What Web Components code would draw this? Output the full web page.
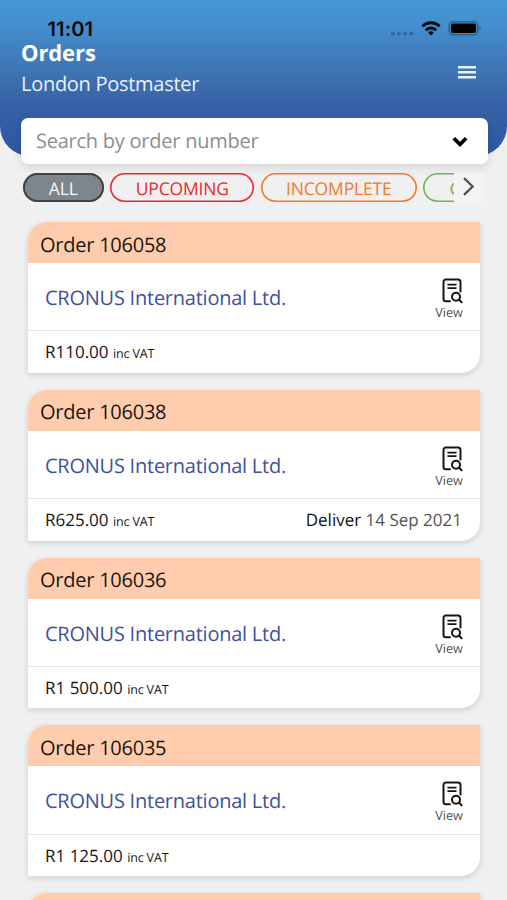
<!DOCTYPE html>
<html lang="en">
<head>
<meta charset="utf-8">
<title>Orders</title>
<style>
html,body{margin:0;height:900px;overflow:hidden;background:#f0f0f0}
body{font-family:"Open Sans","Noto Sans",sans-serif;color:#111;text-rendering:geometricPrecision}
</style>
</head>
<body>
<orders-app></orders-app>
<script>
const define = (name, html, setup) => customElements.define(name, class extends HTMLElement {
  connectedCallback() {
    if (this.shadowRoot) return;
    this.attachShadow({mode: "open"}).innerHTML = html;
    if (setup) setup(this, this.shadowRoot);
  }
});

define("status-bar", `
<style>
:host{display:flex;align-items:flex-end;justify-content:space-between;height:20px;padding:18px 26px 0 47.5px;color:#06080c}
time{font:600 20px/18px Inter,"Liberation Sans",sans-serif;letter-spacing:.15px}
svg{display:block}
</style>
<time>11:01</time>
<svg width="92" height="20" viewBox="389 18 92 20">
  <g fill="#34699c"><circle cx="392.8" cy="33.5" r="2"/><circle cx="398.9" cy="33.5" r="2"/><circle cx="405" cy="33.5" r="2"/><circle cx="411.2" cy="33.5" r="2"/></g>
  <g fill="none" stroke="#05080c" stroke-width="2.9">
    <path d="M422.4 26.2a12.4 12.4 0 0 1 17.2 0"/>
    <path d="M425.7 30.2a7.6 7.6 0 0 1 10.6 0"/>
  </g>
  <path d="M431 35.6l-2.9-3a4.2 4.2 0 0 1 5.8 0z" fill="#05080c"/>
  <rect x="449.2" y="21.7" width="28.6" height="13" rx="4" fill="none" stroke="#315f8a" stroke-width="1.6"/>
  <rect x="451" y="23.5" width="25" height="9.6" rx="2" fill="#000"/>
  <path d="M479.3 26.2q1.6.8 1.6 2t-1.6 2z" fill="#315f8a"/>
</svg>`);

define("page-header", `
<style>
:host{display:block;box-sizing:border-box;height:156px;background:linear-gradient(#4797d5 0,#4390cf 22px,#4180bf 50px,#3e72b1 75px,#3861a6 105px,#325da5 125px,#2e57a0 156px);border-radius:0 0 30px 30px;color:#fff}
.row{display:flex;justify-content:space-between;padding:0 31px 0 21px}
h1{margin:0;font:700 22px/31px "Open Sans",sans-serif;letter-spacing:-.1px}
p{margin:0;font-size:20px;line-height:30px;letter-spacing:-.28px;color:#e9f2fc}
.menu{margin-top:28px}
svg{display:block}
</style>
<status-bar></status-bar>
<div class="row">
  <div><h1><slot name="title"></slot></h1><p><slot></slot></p></div>
  <svg class="menu" width="18" height="14" viewBox="0 0 18 14"><path d="M0 1.2h18M0 6.2h18M0 11.3h18" stroke="#e9f3ff" stroke-width="2.5"/></svg>
</div>`);

define("search-field", `
<style>
:host{display:flex;box-sizing:border-box;align-items:center;justify-content:space-between;height:45.5px;margin:-38px 19.5px 0 20.5px;padding:1px 19px 0 15.5px;background:#fff;border-radius:7px;box-shadow:0 3px 9px rgba(0,0,0,.13);position:relative;color:#8b8e91;font-size:20px;line-height:28px;letter-spacing:-.24px}
svg{margin-top:2px}
</style>
<span><slot></slot></span>
<svg width="17" height="12" viewBox="0 0 17 12"><path d="M1.8 2.3l6.2 6.1 6.2-6.1" fill="none" stroke="#000" stroke-width="3.7"/></svg>`);

define("filter-chip", `
<style>
:host{display:flex;flex:none;box-sizing:border-box;align-items:center;justify-content:center;height:29px;padding-top:2px;box-shadow:inset 0 0 0 1.6px currentColor;border-radius:15px;font-size:17.5px;line-height:24px;letter-spacing:-.15px}
:host([selected]){background:#7f868b;box-shadow:inset 0 0 0 2px #414548}
:host([selected]) span{color:#f4f6f7}
</style>
<span><slot></slot></span>`);

define("filter-bar", `
<style>
:host{display:flex;height:29px;margin:9.5px 22px 0 22.5px}
.track{display:flex;gap:6.3px;width:431px;overflow:hidden}
.next{display:flex;align-items:center;justify-content:center;width:31px;background:#f4f4f5}
svg{margin-top:-2px}
</style>
<div class="track"><slot></slot></div>
<div class="next"><svg width="14" height="20" viewBox="0 0 14 20"><path d="M2 1.2l8.6 8.3L2 17.8" fill="none" stroke="#4e5256" stroke-width="2.3"/></svg></div>`);

define("view-button", `
<style>
:host{display:flex;flex-direction:column;align-items:center;width:30px;color:#505050;font-size:12.7px;line-height:16.5px}
svg{display:block;margin-left:7px}
</style>
<svg width="22" height="26" viewBox="0 0 22 26" fill="none" stroke="#141414" stroke-width="2" stroke-linecap="round" stroke-linejoin="round">
  <path d="M8 23.2H4a2.5 2.5 0 0 1-2.5-2.5V3.9A2.5 2.5 0 0 1 4 1.4h12a2.5 2.5 0 0 1 2.5 2.5v9.7"/>
  <path d="M6 6.6h8M6 10.1h8" stroke-width="1.6"/>
  <circle cx="14" cy="18.8" r="4"/><path d="M17.1 21.8l2.6 2.6"/>
</svg>
<span>View</span>`);

define("order-card", `
<style>
:host{display:flex;flex:none;flex-direction:column;height:150.8px;background:#fff;border-radius:19px 0 19px 0;box-shadow:0 2px 6px rgba(0,0,0,.15);overflow:hidden}
header{box-sizing:border-box;height:41px;padding:8.7px 12px 0;background:#ffcdad;font-size:20px;line-height:28px;letter-spacing:-.24px;color:#1a1512}
.body{display:flex;box-sizing:border-box;height:68.3px;padding:15px 16px 0 17px;justify-content:space-between;border-bottom:1.5px solid #e8e8e8}
.name{font-size:20px;line-height:28px;letter-spacing:-.24px;color:#40529a;margin-top:6px}
footer{display:flex;justify-content:space-between;padding:9px 18px 0 17px;font-size:17px;line-height:24px;color:#161616}
small{font-size:12.5px;letter-spacing:-.15px}
.due{color:#555}b{font-weight:400;color:#111}
</style>
<header></header>`, (el, root) => {
  const number = el.getAttribute("number");
  if (!number) return;
  root.querySelector("header").textContent = "Order " + number;
  const due = el.getAttribute("due");
  root.querySelector("header").insertAdjacentHTML("afterend", `
<div class="body"><span class="name"><slot></slot></span><view-button></view-button></div>
<footer><span>${el.getAttribute("price")} <small>inc VAT</small></span>${due ? `<span class="due"><b>Deliver</b> ${due}</span>` : ""}</footer>`);
});

define("orders-app", `
<style>
:host{display:block;height:900px;overflow:hidden;background:#f0f0f0}
.list{display:flex;flex-direction:column;gap:17px;padding:20px 27px 0 28px}
</style>
<page-header><span slot="title">Orders</span>London Postmaster</page-header>
<search-field>Search by order number</search-field>
<filter-bar>
  <filter-chip selected style="width:81.5px">ALL</filter-chip>
  <filter-chip style="width:144px;color:#ee2631">UPCOMING</filter-chip>
  <filter-chip style="width:156.5px;color:#f3782c">INCOMPLETE</filter-chip>
  <filter-chip style="width:140px;color:#72b35a">COMPLETE</filter-chip>
</filter-bar>
<div class="list">
  <order-card number="106058" price="R110.00">CRONUS International Ltd.</order-card>
  <order-card number="106038" price="R625.00" due="14 Sep 2021">CRONUS International Ltd.</order-card>
  <order-card number="106036" price="R1 500.00">CRONUS International Ltd.</order-card>
  <order-card number="106035" price="R1 125.00">CRONUS International Ltd.</order-card>
  <order-card></order-card>
</div>`);
</script>
</body>
</html>
